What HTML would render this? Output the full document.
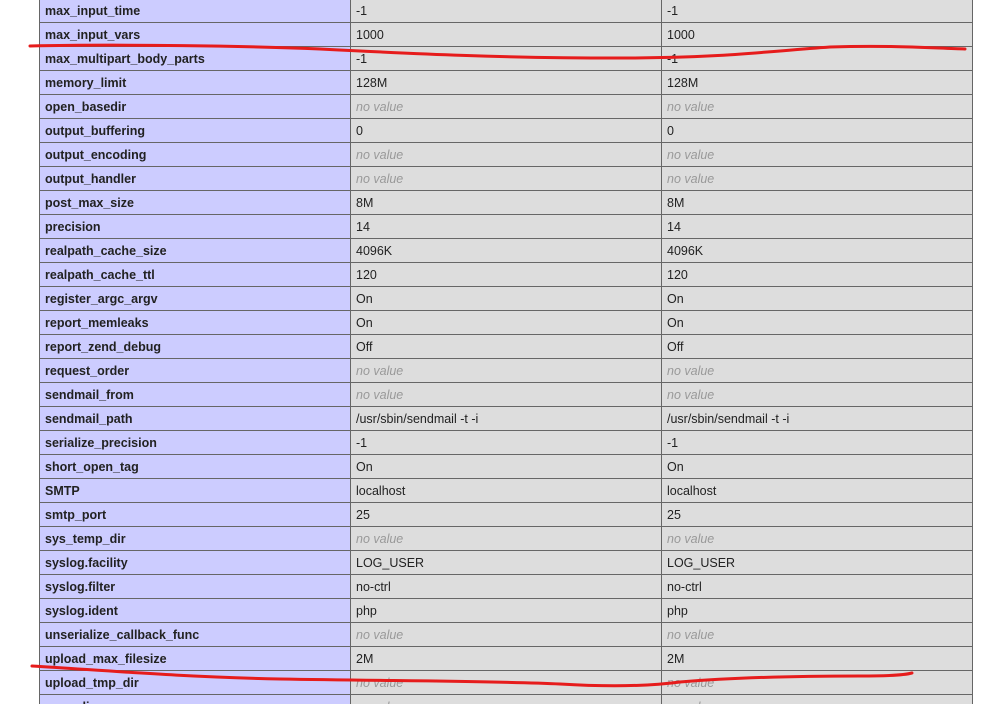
<!DOCTYPE html>
<html><head><meta charset="utf-8"><style>
html,body{margin:0;padding:0;background:#fff;width:983px;height:704px;overflow:hidden;position:relative}
table{position:absolute;left:39px;top:-2px;border-collapse:collapse;font-family:"Liberation Sans",Arial,sans-serif;font-size:12.5px;color:#222}
td{border:1px solid #666;height:24px;padding:0 5px;box-sizing:border-box;vertical-align:middle;white-space:nowrap}
td.e{background:#ccf;width:311px;font-weight:bold}
td.v{background:#ddd;width:311px}
i{color:#999}
svg{position:absolute;left:0;top:0}
</style></head><body>
<table>
<tr><td class="e">max_input_time</td><td class="v">-1</td><td class="v">-1</td></tr>
<tr><td class="e">max_input_vars</td><td class="v">1000</td><td class="v">1000</td></tr>
<tr><td class="e">max_multipart_body_parts</td><td class="v">-1</td><td class="v">-1</td></tr>
<tr><td class="e">memory_limit</td><td class="v">128M</td><td class="v">128M</td></tr>
<tr><td class="e">open_basedir</td><td class="v"><i>no value</i></td><td class="v"><i>no value</i></td></tr>
<tr><td class="e">output_buffering</td><td class="v">0</td><td class="v">0</td></tr>
<tr><td class="e">output_encoding</td><td class="v"><i>no value</i></td><td class="v"><i>no value</i></td></tr>
<tr><td class="e">output_handler</td><td class="v"><i>no value</i></td><td class="v"><i>no value</i></td></tr>
<tr><td class="e">post_max_size</td><td class="v">8M</td><td class="v">8M</td></tr>
<tr><td class="e">precision</td><td class="v">14</td><td class="v">14</td></tr>
<tr><td class="e">realpath_cache_size</td><td class="v">4096K</td><td class="v">4096K</td></tr>
<tr><td class="e">realpath_cache_ttl</td><td class="v">120</td><td class="v">120</td></tr>
<tr><td class="e">register_argc_argv</td><td class="v">On</td><td class="v">On</td></tr>
<tr><td class="e">report_memleaks</td><td class="v">On</td><td class="v">On</td></tr>
<tr><td class="e">report_zend_debug</td><td class="v">Off</td><td class="v">Off</td></tr>
<tr><td class="e">request_order</td><td class="v"><i>no value</i></td><td class="v"><i>no value</i></td></tr>
<tr><td class="e">sendmail_from</td><td class="v"><i>no value</i></td><td class="v"><i>no value</i></td></tr>
<tr><td class="e">sendmail_path</td><td class="v">/usr/sbin/sendmail -t -i</td><td class="v">/usr/sbin/sendmail -t -i</td></tr>
<tr><td class="e">serialize_precision</td><td class="v">-1</td><td class="v">-1</td></tr>
<tr><td class="e">short_open_tag</td><td class="v">On</td><td class="v">On</td></tr>
<tr><td class="e">SMTP</td><td class="v">localhost</td><td class="v">localhost</td></tr>
<tr><td class="e">smtp_port</td><td class="v">25</td><td class="v">25</td></tr>
<tr><td class="e">sys_temp_dir</td><td class="v"><i>no value</i></td><td class="v"><i>no value</i></td></tr>
<tr><td class="e">syslog.facility</td><td class="v">LOG_USER</td><td class="v">LOG_USER</td></tr>
<tr><td class="e">syslog.filter</td><td class="v">no-ctrl</td><td class="v">no-ctrl</td></tr>
<tr><td class="e">syslog.ident</td><td class="v">php</td><td class="v">php</td></tr>
<tr><td class="e">unserialize_callback_func</td><td class="v"><i>no value</i></td><td class="v"><i>no value</i></td></tr>
<tr><td class="e">upload_max_filesize</td><td class="v">2M</td><td class="v">2M</td></tr>
<tr><td class="e">upload_tmp_dir</td><td class="v"><i>no value</i></td><td class="v"><i>no value</i></td></tr>
<tr><td class="e">user_dir</td><td class="v"><i>no value</i></td><td class="v"><i>no value</i></td></tr>
</table>
<svg width="983" height="704">
<path d="M30 46 C120 44 250 46 320 49 C420 54 500 58 620 58 C720 58 760 52 830 47 C890 45 930 48 965 49" fill="none" stroke="#e61c1c" stroke-width="3" stroke-linecap="round"/>
<path d="M32 666 C100 670 180 677 280 679 C400 681 500 681 560 684 C610 687 650 686 680 682 C740 677 800 676 860 676 C890 676 905 675 912 673" fill="none" stroke="#e61c1c" stroke-width="3" stroke-linecap="round"/>
</svg>
</body></html>
